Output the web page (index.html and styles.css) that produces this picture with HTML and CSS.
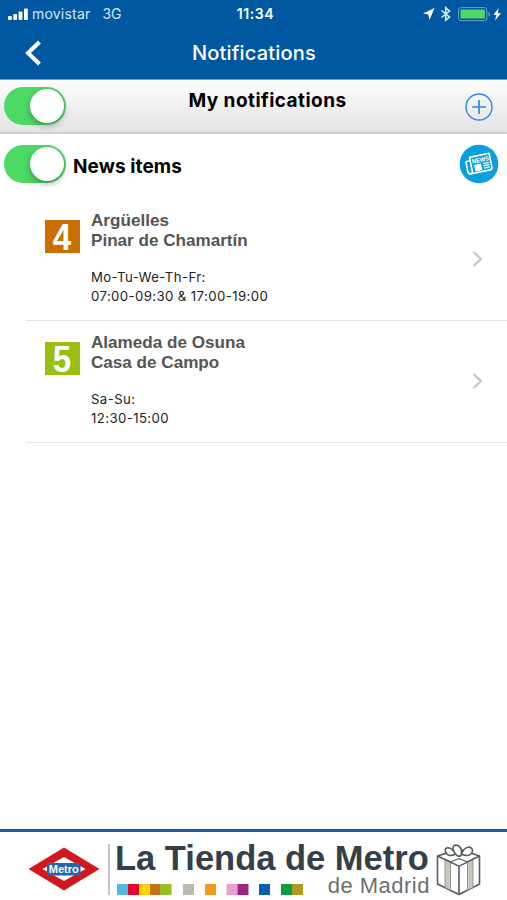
FILE: index.html
```html
<!DOCTYPE html>
<html lang="en">
<head>
    <meta charset="utf-8">
    <title>Notifications</title>
    <link rel="stylesheet" href="styles.css">
</head>
<body>
<header class="topbar">
    <div class="status">
        <div class="status-left">
            <svg width="21" height="14" viewBox="0 0 21 14" fill="#fff">
                <rect x="0" y="9" width="3.8" height="4" rx="1"/>
                <rect x="5.3" y="7" width="3.8" height="6" rx="1"/>
                <rect x="10.6" y="4.5" width="3.8" height="8.5" rx="1"/>
                <rect x="16" y="1.5" width="3.8" height="11.5" rx="1"/>
            </svg>
            <span class="carrier">movistar</span>
            <span class="network">3G</span>
        </div>
        <span class="clock">11:34</span>
        <div class="status-right">
            <svg width="80" height="16" viewBox="0 0 80 16">
                <path d="M12.5 2 L1 7.5 L6.3 8.5 L7.5 14 Z" fill="#fff"/>
                <path d="M19.5 4.5 L27.5 11 L23.7 14.2 V1.800 L27.5 5 L19.5 11.500" fill="none" stroke="#dceaf7" stroke-width="1.6"/>
                <rect x="36.5" y="1.6" width="28.4" height="13" rx="2.6" fill="none" stroke="#6c9fcd"/>
                <rect x="38.5" y="3.6" width="24.4" height="9" rx="1" fill="#4cd964"/>
                <path d="M66.5 6 a2.4 2.4 0 0 1 0 4.5z" fill="#6c9fcd"/>
                <path d="M76.5 2 L71.5 9 H74.5 L73 14.5 L79 7.2 H76 Z" fill="#fff"/>
            </svg>
        </div>
    </div>
    <div class="nav">
        <svg class="back" width="18" height="26" viewBox="0 0 18 26">
            <path d="M15.5 2 L4 13 L15.5 24" fill="none" stroke="#fff" stroke-width="4"/>
        </svg>
        <h1>Notifications</h1>
    </div>
</header>

<section class="section-bar">
    <div class="toggle"><div class="knob"></div></div>
    <h2>My notifications</h2>
    <svg class="add" width="28" height="28" viewBox="0 0 28 28" fill="none" stroke="#2f86ee" stroke-width="1.4">
        <circle cx="14" cy="14" r="13"/>
        <path d="M14 7 V21 M7 14 H21" stroke-width="1.7"/>
    </svg>
</section>

<section class="news">
    <div class="toggle"><div class="knob"></div></div>
    <h2>News items</h2>
    <svg class="news-icon" width="40" height="40" viewBox="0 0 40 40">
        <circle cx="20" cy="20" r="19.3" fill="#0b9fdf"/>
        <g transform="rotate(-12 20 20)" fill="none" stroke="#fff" stroke-width="1.6" stroke-linejoin="round">
            <path d="M12 11.5 H32 V25.5 Q32 28 29.5 28 H10.5 Q7.5 28 7.5 25 V15 H12"/>
            <path d="M12 11.5 V25 Q12 28 10 28"/>
            <rect x="15" y="20" width="7" height="6.5" fill="#fff" stroke="none"/>
            <path d="M24 20.5 H30 M24 22.8 H30 M24 25.1 H30" stroke-width="1.2"/>
        </g>
        <text class="news-word" x="13.7" y="18.5" transform="rotate(-12 20 20)" textLength="17" lengthAdjust="spacingAndGlyphs">NEWS</text>
    </svg>
</section>

<ul class="lines">
    <li class="line">
        <div class="badge line-4"><span>4</span></div>
        <div class="info">
            <h3>Argüelles<br>Pinar de Chamartín</h3>
            <p>Mo-Tu-We-Th-Fr:<br>07:00-09:30 &amp; 17:00-19:00</p>
        </div>
        <svg class="chevron" width="12" height="18" viewBox="0 0 12 18">
            <path d="M1.5 2 L8.8 9 L1.5 16" fill="none" stroke="#c4c4c7" stroke-width="2.1"/>
        </svg>
    </li>
    <li class="line">
        <div class="badge line-5"><span>5</span></div>
        <div class="info">
            <h3>Alameda de Osuna<br>Casa de Campo</h3>
            <p>Sa-Su:<br>12:30-15:00</p>
        </div>
        <svg class="chevron" width="12" height="18" viewBox="0 0 12 18">
            <path d="M1.5 2 L8.8 9 L1.5 16" fill="none" stroke="#c4c4c7" stroke-width="2.1"/>
        </svg>
    </li>
</ul>

<footer class="banner">
    <svg class="metro" width="72" height="44" viewBox="0 0 72 44">
        <path d="M36 0.5 L71.5 22 L36 43.5 L0.5 22 Z" fill="#d2181f"/>
        <path d="M36 10 L57.5 22 L36 34 L14.5 22 Z" fill="#fff"/>
        <rect x="19" y="16" width="33.5" height="12.5" fill="#2465ae"/>
        <text class="metro-word" x="20.8" y="26.2" textLength="30" lengthAdjust="spacingAndGlyphs">Metro</text>
    </svg>
    <div class="shop">
        <div class="shop-name">La Tienda de Metro</div>
        <div class="shop-sub">
            <svg width="187" height="11" viewBox="0 0 187 11">
                <rect x="0" width="11" height="11" fill="#52b9dc"/>
                <rect x="11" width="11" height="11" fill="#e4052e"/>
                <rect x="22" width="11" height="11" fill="#fdd208"/>
                <rect x="33" width="10" height="11" fill="#c6721b"/>
                <rect x="43" width="11.5" height="11" fill="#97bf26"/>
                <rect x="66" width="11" height="11" fill="#bbbab0"/>
                <rect x="88" width="11" height="11" fill="#f29a18"/>
                <rect x="109.5" width="11" height="11" fill="#eb9fc8"/>
                <rect x="120.5" width="11" height="11" fill="#9c257f"/>
                <rect x="142" width="11" height="11" fill="#0b60ad"/>
                <rect x="164" width="11" height="11" fill="#0c9d3f"/>
                <rect x="175" width="11" height="11" fill="#ac9d20"/>
            </svg>
            <span>de Madrid</span>
        </div>
    </div>
    <svg class="gift" width="46" height="52" viewBox="0 0 46 52" fill="none" stroke="#555b5f" stroke-width="1.6" stroke-linejoin="round">
        <path d="M1.5 12 L23 5 L43.5 12 V40 L23 50.5 L1.5 40 Z" fill="#fff"/>
        <path d="M9 15.5 L14.5 18 V46 L9 43.5 Z M31.5 18 L37 15.5 V43.5 L31.5 46 Z" fill="#c9c6bb" stroke="#8d8f8c" stroke-width=".9"/>
        <path d="M1.5 12 L23 22 L43.5 12 M23 22 V50.5"/>
        <path d="M14.5 18 L23 14.5 L31.5 18 L23 22 Z" fill="#fff" stroke-width="1.1"/>
        <path d="M19.5 10 C15 1 7.5 3 9.5 7.500 C11 12 15 12.5 19.5 10 Z M25.5 10 C29 1 36 2 36.500 6.5 C36 12 30 12.5 25.5 10 Z" fill="#fff"/>
        <path d="M19.5 10 C15 4 17 0 22 1.500 C26 3.500 26 7 25 11.500 C23 13 21 12 19.5 10 Z" fill="#fff"/>
    </svg>
</footer>
</body>
</html>
```
FILE: styles.css
```css
* {
    box-sizing: border-box;
}

body {
    margin: 0;
    height: 900px;
    display: flex;
    flex-direction: column;
    background: #fff;
    color: #000;
    font-family: Inter, "Liberation Sans", sans-serif;
    overflow: hidden;
}

h1, h2, h3, p, ul {
    margin: 0;
    padding: 0;
}

svg {
    display: block;
    flex: none;
}

.topbar {
    height: 80px;
    background: #0058a3;
    border-bottom: 1px solid #6f9fca;
    color: #fff;
}

.status {
    display: grid;
    grid-template-columns: 1fr auto 1fr;
    align-items: center;
    height: 27px;
    padding: 0 5px 0 8px;
    font-size: 14px;
}

.status-left {
    display: flex;
    align-items: center;
    color: #d5e6f5;
}

.carrier {
    margin-left: 3px;
    letter-spacing: .2px;
}

.network {
    margin-left: 12px;
}

.clock {
    font-weight: 600;
    letter-spacing: .6px;
    padding-left: 1px;
}

.status-right {
    justify-self: end;
}

.nav {
    display: grid;
    grid-template-columns: 48px 1fr 48px;
    height: 52px;
    align-items: center;
}

.back {
    margin: 0 0 0 24px;
}

h1 {
    font-size: 20px;
    font-weight: 500;
    text-align: center;
    letter-spacing: .2px;
    padding-left: 1px;
}

.section-bar {
    display: grid;
    grid-template-columns: 62px 1fr 62px;
    height: 54px;
    padding: 7px 14px 0 4px;
    background: linear-gradient(#fdfdfd, #e4e4e5);
    border-bottom: 2px solid #cfcfcf;
}

h2 {
    font-size: 19px;
    font-weight: 700;
    line-height: 28px;
    letter-spacing: .1px;
}

.section-bar h2 {
    text-align: center;
    padding-left: 38px;
    letter-spacing: .45px;
}

.add {
    justify-self: end;
    margin-top: 6px;
}

.toggle {
    display: flex;
    justify-content: flex-end;
    width: 62px;
    height: 38px;
    padding: 2px;
    border-radius: 19px;
    background: #4cd964;
}

.knob {
    width: 34px;
    height: 34px;
    border-radius: 50%;
    background: #fff;
    box-shadow: 0 3px 6px rgba(0, 0, 0, .3);
}

.news {
    display: flex;
    height: 64px;
    padding: 11px 8px 0 4px;
}

.news h2 {
    flex: 1;
    margin: 8px 0 0 7px;
}

.news-icon {
    margin-top: -1px;
}

.news-word {
    font: bold 6.5px "Liberation Sans", sans-serif;
    fill: #fff;
}

.lines {
    list-style: none;
    margin-left: 26px;
}

.line {
    display: flex;
    align-items: flex-start;
    height: 122px;
    padding: 12px 23px 0 19px;
    border-bottom: 1px solid #e6e6e8;
}

.line:first-child {
    height: 123px;
    padding-top: 13px;
}

.badge {
    width: 35px;
    height: 33px;
    margin-top: 9px;
    color: #fff;
    font: bold 36px/36px "Liberation Sans", sans-serif;
    text-align: center;
}

.badge span {
    display: inline-block;
    transform: scaleX(.92);
}

.line-4 {
    background: #cb7000;
}

.line-5 {
    background: #97bf0b;
}

.info {
    flex: 1;
    margin-left: 11px;
}

h3 {
    color: #555;
    font: bold 17.1px/20px "Liberation Sans", sans-serif;
}

.info p {
    margin-top: 17px;
    font-size: 13.2px;
    line-height: 19px;
    letter-spacing: .4px;
    color: #222;
}

.chevron {
    margin-top: 39px;
}

.banner {
    display: flex;
    height: 71px;
    margin-top: auto;
    padding: 12px 24px 0 28px;
    border-top: 3px solid #145ca4;
}

.metro {
    margin-top: 3px;
}

.metro-word {
    font: bold 11px "Liberation Sans", sans-serif;
    fill: #fff;
}

.shop {
    width: 322px;
    height: 51px;
    margin-left: 8px;
    padding-left: 5px;
    border-left: 2px solid #c4c7c9;
}

.shop-name {
    color: #344049;
    font: bold 34.5px/28px "Liberation Sans", sans-serif;
    white-space: nowrap;
}

.shop-sub {
    display: flex;
    justify-content: space-between;
    align-items: center;
    color: #6b7073;
    font: 22px/26px "Liberation Sans", sans-serif;
    letter-spacing: .5px;
}

.shop-sub span {
    margin-top: 1px;
}

.shop-sub svg {
    margin: 7px 0 0 2px;
}

.gift {
    margin-left: 6px;
}
```
